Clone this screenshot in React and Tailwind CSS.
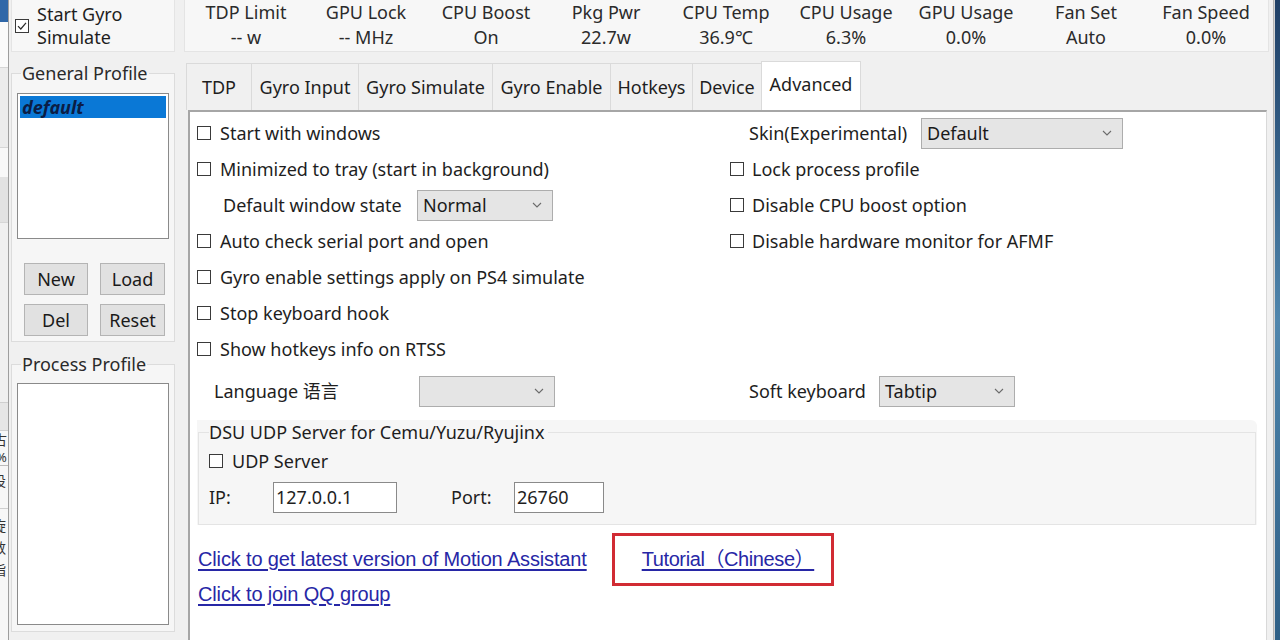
import React from "react";

const FONT = { fontFamily: '"Noto Sans", "Noto Sans CJK SC", sans-serif' };

function Chevron() {
  return (
    <svg width="10" height="6" viewBox="0 0 10 6" fill="none">
      <path d="M1 1 L5 5 L9 1" stroke="#6b6b6b" strokeWidth="1.1" />
    </svg>
  );
}

function Select({ w, value }) {
  return (
    <div
      className={`h-[31px] bg-[#e5e5e5] border border-[#adadad] flex items-center justify-between pl-[5px] pr-[10px] text-[18px] text-[#1a1a1a] shrink-0`}
      style={{ width: w }}
    >
      <span>{value}</span>
      <Chevron />
    </div>
  );
}

function Box({ checked }) {
  return (
    <div className="w-[14px] h-[14px] border border-[#3a3a3a] bg-white shrink-0 flex items-center justify-center">
      {checked && (
        <svg width="12" height="12" viewBox="0 0 12 12" fill="none">
          <path d="M2 6.2 L4.8 9 L10 2.8" stroke="#2a2a2a" strokeWidth="1.2" />
        </svg>
      )}
    </div>
  );
}

function Check({ label, gap = "gap-[9px]" }) {
  return (
    <div className={`flex items-center ${gap}`}>
      <Box />
      <span>{label}</span>
    </div>
  );
}

function Btn({ label, w }) {
  return (
    <div
      className="h-[32px] bg-[#e1e1e1] border border-[#b4b4b4] flex items-center justify-center text-[18px] text-[#1a1a1a]"
      style={{ width: w }}
    >
      {label}
    </div>
  );
}

const stats = [
  ["TDP Limit", "-- w"],
  ["GPU Lock", "-- MHz"],
  ["CPU Boost", "On"],
  ["Pkg Pwr", "22.7w"],
  ["CPU Temp", "36.9\u2103"],
  ["CPU Usage", "6.3%"],
  ["GPU Usage", "0.0%"],
  ["Fan Set", "Auto"],
  ["Fan Speed", "0.0%"],
];

const tabs = [
  ["TDP", 65],
  ["Gyro Input", 107],
  ["Gyro Simulate", 134],
  ["Gyro Enable", 118],
  ["Hotkeys", 82],
  ["Device", 69],
];

export default function App() {
  return (
    <div
      className="w-[1280px] h-[640px] flex overflow-hidden text-[18px] text-[#1e1e1e]"
      style={FONT}
    >
      {/* other window strip on the left */}
      <div className="w-[9px] border-r border-[#9e9e9e] flex flex-col overflow-hidden text-[14px] leading-[20px] text-[#333] bg-[#f4f4f4]">
        <div className="h-[22px] bg-[#2f67a8]" />
        <div className="h-[45px] bg-[#fbfbfb]" />
        <div className="h-[80px] bg-[#ececec] border-t border-[#d6d6d6]" />
        <div className="h-[30px] bg-[#f8f8f8] border-t border-[#d6d6d6]" />
        <div className="h-[45px] bg-[#e2e2e2]" />
        <div className="h-[180px] bg-[#f0f0f0] border-t border-[#d6d6d6]" />
        <div className="h-[28px] bg-[#e6e6e6] border-t border-[#cfcfcf]" />
        <div className="h-[78px] bg-[#f7f7f7] border-t border-[#cfcfcf] whitespace-nowrap">
          <div className="-ml-[7px] leading-[18px]">古</div>
          <div className="-ml-[4px] leading-[16px] text-[13px]">%</div>
          <div className="-ml-[8px] leading-[30px] border-t border-[#bbb]">设</div>
        </div>
        <div className="h-[70px] bg-[#f7f7f7] border-t border-[#cfcfcf] whitespace-nowrap">
          <div className="-ml-[8px] leading-[22px] mt-[6px]">旋</div>
          <div className="-ml-[8px] leading-[22px]">数</div>
          <div className="-ml-[8px] leading-[22px]">指</div>
        </div>
        <div className="flex-1 bg-[#f7f7f7]" />
      </div>

      {/* main app */}
      <div className="flex-1 bg-[#f0f0f0] flex pl-[2px]">
        {/* left column */}
        <div className="w-[164px] flex flex-col shrink-0">
          <div className="h-[52px] bg-[#f7f7f7] border border-t-0 border-[#e4e4e4] flex items-center pl-[3px] gap-[8px]">
            <Box checked />
            <div className="leading-[23px] text-[#1e1e1e]">
              <div>Start Gyro</div>
              <div>Simulate</div>
            </div>
          </div>

          <fieldset className="mt-[9px] border border-[#dcdcdc] bg-[#f6f6f6] px-[5px] pb-[6px] h-[281px]">
            <legend className="ml-[4px] px-[1px] leading-[24px] text-[#2a2a2a]">General Profile</legend>
            <div className="mt-[8px] h-[146px] border border-[#8a8a8a] bg-white p-[2px]">
              <div className="h-[22px] bg-[#0a78d6] flex items-center pl-[2px]">
                <span className="font-bold italic text-[#0b1d45] leading-[20px]">default</span>
              </div>
            </div>
            <div className="mt-[24px] grid grid-cols-2 gap-y-[9px] pl-[7px] pr-[4px]">
              <Btn label="New" w={64} />
              <div className="flex justify-end"><Btn label="Load" w={65} /></div>
              <Btn label="Del" w={64} />
              <div className="flex justify-end"><Btn label="Reset" w={65} /></div>
            </div>
          </fieldset>

          <fieldset className="mt-[10px] border border-[#dcdcdc] bg-[#f6f6f6] px-[5px] h-[280px]">
            <legend className="ml-[4px] px-[1px] leading-[24px] text-[#2a2a2a]">Process Profile</legend>
            <div className="mt-[7px] h-[242px] border border-[#8a8a8a] bg-white" />
          </fieldset>
        </div>

        {/* right column */}
        <div className="ml-[9px] w-[1085px] flex flex-col shrink-0">
          <div className="h-[52px] bg-[#f7f7f7] border border-t-0 border-[#e4e4e4] flex pl-[1px] leading-[25px] text-[#2b2b2b]">
            {stats.map(([a, b]) => (
              <div key={a} className="w-[120px] text-center">
                <div>{a}</div>
                <div>{b}</div>
              </div>
            ))}
          </div>

          {/* tabs */}
          <div className="mt-[9px] h-[49px] flex items-end pl-[2px]">
            {tabs.map(([t, w]) => (
              <div
                key={t}
                className="h-[47px] flex items-center justify-center border-t border-l border-[#dadada] bg-[#f0f0f0] text-[#1e1e1e]"
                style={{ width: w }}
              >
                {t}
              </div>
            ))}
            <div className="w-[100px] h-[49px] flex items-start justify-center pt-[9px] bg-white border-t border-x border-[#dadada]">
              Advanced
            </div>
          </div>

          {/* content panel */}
          <div className="flex-1 ml-[4px] mr-[2px] bg-white border-t-2 border-l-2 border-[#a6a6a6] border-r border-r-[#d9d9d9] pt-[3px] pl-[7px] pr-[9px]">
            <div className="flex">
              <div className="w-[533px] flex flex-col shrink-0">
                <div className="h-[36px] flex items-center"><Check label="Start with windows" /></div>
                <div className="h-[36px] flex items-center"><Check label="Minimized to tray (start in background)" /></div>
                <div className="h-[36px] flex items-center pl-[26px]">
                  <span className="w-[194px]">Default window state</span>
                  <Select w={136} value="Normal" />
                </div>
                <div className="h-[36px] flex items-center"><Check label="Auto check serial port and open" /></div>
                <div className="h-[36px] flex items-center"><Check label="Gyro enable settings apply on PS4 simulate" /></div>
                <div className="h-[36px] flex items-center"><Check label="Stop keyboard hook" /></div>
                <div className="h-[36px] flex items-center"><Check label="Show hotkeys info on RTSS" /></div>
              </div>
              <div className="flex flex-col">
                <div className="h-[36px] flex items-center pl-[19px]">
                  <span className="w-[172px]">Skin(Experimental)</span>
                  <Select w={202} value="Default" />
                </div>
                <div className="h-[36px] flex items-center"><Check label="Lock process profile" gap="gap-[8px]" /></div>
                <div className="h-[36px] flex items-center"><Check label="Disable CPU boost option" gap="gap-[8px]" /></div>
                <div className="h-[36px] flex items-center"><Check label="Disable hardware monitor for AFMF" gap="gap-[8px]" /></div>
              </div>
            </div>

            <div className="mt-[6px] h-[36px] flex items-center">
              <div className="w-[533px] flex items-center pl-[17px] shrink-0">
                <span className="w-[205px]">Language 语言</span>
                <Select w={136} value="" />
              </div>
              <div className="flex items-center pl-[19px]">
                <span className="w-[130px]">Soft keyboard</span>
                <Select w={136} value="Tabtip" />
              </div>
            </div>

            <div className="mt-[11px] bg-[#f6f6f6] rounded-tr-[6px]">
              <fieldset className="border border-[#e4e4e4] mx-[1px] px-[10px] pb-[10px]">
                <legend className="leading-[24px] pr-[4px] text-[#1e1e1e]">DSU UDP Server for Cemu/Yuzu/Ryujinx</legend>
                <div className="h-[34px] flex items-center"><Check label="UDP Server" gap="gap-[9px]" /></div>
                <div className="mt-[2px] h-[34px] flex items-center">
                  <span className="w-[64px]">IP:</span>
                  <div className="w-[124px] h-[31px] bg-white border border-[#8a8a8a] flex items-center pl-[2px]">127.0.0.1</div>
                  <span className="ml-[54px] w-[63px]">Port:</span>
                  <div className="w-[90px] h-[31px] bg-white border border-[#8a8a8a] flex items-center pl-[2px]">26760</div>
                </div>
              </fieldset>
            </div>

            <div
              className="mt-[16px] pl-[1px] text-[#2727a6] text-[20px]"
              style={{ fontFamily: '"Liberation Sans", "Noto Sans CJK SC", sans-serif' }}
            >
              <div className="h-[35px] flex items-center">
                <span className="underline underline-offset-[3px] tracking-[-0.15px]">Click to get latest version of Motion Assistant</span>
                <span className="relative ml-[55px] inline-flex items-center h-[35px]">
                  <span className="underline underline-offset-[3px] tracking-[-0.4px]">Tutorial（Chinese）</span>
                  <span className="absolute -left-[30px] -right-[20px] -top-[8px] -bottom-[10px] border-[3px] border-[#d12b33]" />
                </span>
              </div>
              <div className="h-[35px] flex items-center">
                <span className="underline underline-offset-[3px] tracking-[-0.15px]">Click to join QQ group</span>
              </div>
            </div>
          </div>
        </div>
      </div>

      {/* right edge: window border + desktop */}
      <div className="w-[7px] flex">
        <div className="w-[2px] bg-[#d4d4d4] border-l border-[#b5b5b5]" />
        <div className="flex-1 bg-gradient-to-b from-[#1f3f66] via-[#4f86ad] to-[#2e5f86]" />
      </div>
    </div>
  );
}
